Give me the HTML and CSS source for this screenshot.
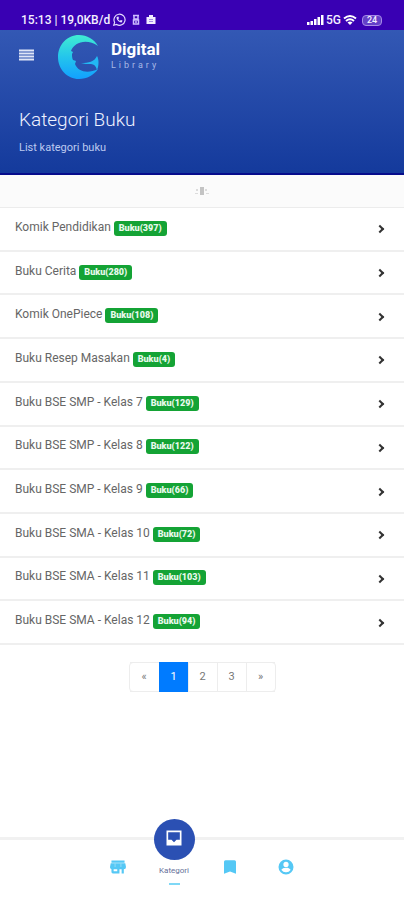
FILE: index.html
```html
<!DOCTYPE html>
<html lang="id">
<head>
<meta charset="utf-8">
<meta name="viewport" content="width=device-width, initial-scale=1">
<title>Kategori Buku</title>
<link rel="stylesheet" href="styles.css">
</head>
<body>
<div class="status">
  <div class="status-group">
    <span>15:13 | 19,0KB/d</span>
    <svg width="14" height="14" viewBox="0 0 24 24" fill="none" stroke="#e6dcff" stroke-width="2"><path d="M3 21l1.500-5A9.500 9.500 0 1 1 8 19.700z"/><path d="M8 7c-1 4 4 10 9 9l1-3-3-1-1.500 1.500-3-3L12 9l-1-3z" fill="#e6dcff" stroke="none"/></svg>
    <svg class="gap-left" width="8" height="12" viewBox="0 0 8 12" fill="none" stroke="#cdbcff" stroke-width="1.500"><path d="M1 1.500h6M2 2v3h4V2M1.500 6h5v4h-5zM3 8h2"/></svg>
    <svg class="gap-left" width="10" height="12" viewBox="0 0 10 12"><path d="M3 3V1h4v2h2.500v7H.5V3z" fill="#f2edff"/><path d="M3 5.500h4M3 7.500h4" stroke="#a58ae6"/></svg>
  </div>
  <div class="status-group">
    <svg width="17" height="12" viewBox="0 0 17 12" fill="#fff"><path d="M0 8h2.500v3H0zM3.500 7H6v4H3.500zM7 5h2.500v6H7zM10.500 3H13v8h-2.500zM14 1h2.500v10H14z"/></svg>
    <span>5G</span>
    <svg width="14" height="12" viewBox="0 0 14 12" fill="none" stroke="#fff" stroke-width="2"><path d="M1 4.500q6-5 12 0M3 7q4-3.500 8 0"/><path d="M4.500 8.500q2.500-2 5 0L7 11z" fill="#fff" stroke="none"/></svg>
    <span class="battery">24</span>
  </div>
</div>

<header class="hero">
  <div class="bar">
    <button class="menu" type="button" aria-label="Menu">
      <svg width="15" height="12" viewBox="0 0 15 12"><path d="M0 1.500h15M0 4.500h15M0 7.500h15M0 10.500h15" stroke="#dfe5f7" stroke-width="2"/></svg>
    </button>
    <a class="brand" href="#">
      <svg width="42" height="44" viewBox="0 0 42 44">
        <defs><linearGradient id="g" x1="0" y1="0" x2="0" y2="1"><stop offset="0" stop-color="#40edd2"/><stop offset=".5" stop-color="#24c5ec"/><stop offset="1" stop-color="#12a0ff"/></linearGradient></defs>
        <path fill="url(#g)" d="M40 11C36 4 29 0 21 0 9 0 0 10 0 22s9 22 21 22c8 0 15-4 19-10-10 5-20 3-23-5l1-3-3-1c-1-2-1-4-1-6l1-2-2-1C16 7 29 3 40 11z"/>
        <path fill="#22b8f4" d="M23 28c8 0 13-1 16-7 2 3 2 10 0 14-1-4-3-6-6-6-4 0-7 0-10-1z"/>
      </svg>
      <span class="brand-text"><strong>Digital</strong><small>Library</small></span>
    </a>
  </div>
  <h1>Kategori Buku</h1>
  <p>List kategori buku</p>
</header>

<main>
  <div class="strip">
    <svg width="14" height="10" viewBox="0 0 14 10" fill="#c4c4c4"><path d="M5 1h4v8H5z"/><path d="M1 3h2v2H1zM0 7h3v1H0zM10 3h2v2h-2zM11 7h3v1h-3z" fill="#dcdcdc"/></svg>
  </div>
  <ul class="list">
    <li><a href="#"><span>Komik Pendidikan <b>Buku(397)</b></span></a></li>
    <li><a href="#"><span>Buku Cerita <b>Buku(280)</b></span></a></li>
    <li><a href="#"><span>Komik OnePiece <b>Buku(108)</b></span></a></li>
    <li><a href="#"><span>Buku Resep Masakan <b>Buku(4)</b></span></a></li>
    <li><a href="#"><span>Buku BSE SMP - Kelas 7 <b>Buku(129)</b></span></a></li>
    <li><a href="#"><span>Buku BSE SMP - Kelas 8 <b>Buku(122)</b></span></a></li>
    <li><a href="#"><span>Buku BSE SMP - Kelas 9 <b>Buku(66)</b></span></a></li>
    <li><a href="#"><span>Buku BSE SMA - Kelas 10 <b>Buku(72)</b></span></a></li>
    <li><a href="#"><span>Buku BSE SMA - Kelas 11 <b>Buku(103)</b></span></a></li>
    <li><a href="#"><span>Buku BSE SMA - Kelas 12 <b>Buku(94)</b></span></a></li>
  </ul>
  <nav class="pages" aria-label="Halaman">
    <a href="#">«</a><a class="current" href="#">1</a><a href="#">2</a><a href="#">3</a><a href="#">»</a>
  </nav>
</main>

<nav class="tabs" aria-label="Navigasi">
  <a href="#" aria-label="Toko"><svg width="16" height="18" viewBox="1 0 22 24" fill="#55c8f5"><path d="M3 3h18v3H3zM2 7h20l1 5a3 3 0 0 1-3 3v6h-3v-6h-3v6H5a2 2 0 0 1-2-2v-4a3 3 0 0 1-2-3zm4 8v3h5v-3z"/><path d="M8 7v5M16 7v5" stroke="#a6e2fa"/></svg></a>
  <a class="active" href="#">
    <span class="bubble"><svg width="20" height="20" viewBox="0 0 24 24"><path d="M4 4h16v16H4z" fill="none" stroke="#fff" stroke-width="2"/><path d="M4 14h5l3 3 3-3h5v6H4z" fill="#fff"/></svg></span>
    <span class="tab-label">Kategori</span>
  </a>
  <a href="#" aria-label="Simpanan"><svg width="18" height="18" viewBox="0 0 24 24" fill="#55c8f5"><path d="M18 3H6a2 2 0 0 0-2 2v16l8-3 8 3V5a2 2 0 0 0-2-2z"/></svg></a>
  <a href="#" aria-label="Akun"><svg width="18" height="18" viewBox="0 0 24 24" fill="#55c8f5"><path d="M12 2a10 10 0 1 0 0 20 10 10 0 0 0 0-20zm0 3a3.500 3.500 0 1 1 0 7 3.500 3.500 0 0 1 0-7zm0 14a7 7 0 0 1-6-3c0-2 4-3 6-3s6 1 6 3a7 7 0 0 1-6 3z"/></svg></a>
</nav>
</body>
</html>
```
FILE: styles.css
```css
*, *::after { box-sizing: border-box; }
body {
  margin: 0;
  min-height: 100vh;
  display: flex;
  flex-direction: column;
  background: #fff;
  color: #666;
  font-family: Roboto, "Liberation Sans", sans-serif;
  font-size: 12px;
}
a { color: inherit; text-decoration: none; }
main { flex: 1; }

.status {
  display: flex;
  justify-content: space-between;
  height: 30px;
  padding: 12px 22px 2px 21px;
  background: #3900b3;
  color: #f4efff;
  font-weight: 500;
  line-height: 16px;
}
.status-group { display: flex; align-items: center; gap: 2px; }
.gap-left { margin-left: 4px; }
.battery {
  width: 20px;
  margin-left: 3px;
  border: 1px solid #a58ae6;
  border-radius: 4px;
  background: #6440c8;
  font-size: 9px;
  line-height: 9px;
  text-align: center;
}

.hero {
  height: 145px;
  padding: 0 19px;
  border-bottom: 2px solid #060c8c;
  background: linear-gradient(#3358b4, #143a9c);
  color: #eef2ff;
}
.bar { display: flex; align-items: center; height: 53px; }
.menu {
  width: 14px;
  height: 24px;
  padding: 0 0 4px;
  border: 0;
  background: none;
}
.menu svg { display: block; }
.brand { display: flex; align-items: center; gap: 11px; margin-left: 25px; }
.brand svg { display: block; }
.brand-text { display: flex; flex-direction: column; }
.brand strong { font-size: 17px; line-height: 18px; color: #fff; }
.brand small { font-size: 9px; line-height: 15px; letter-spacing: 3px; color: #a9bae6; }
h1 { margin: 24px 0 0; font-size: 19px; font-weight: 300; line-height: 26px; }
.hero p { margin: 8px 0 0; font-size: 11px; line-height: 14px; color: #bccaf0; }

.strip {
  display: flex;
  align-items: center;
  justify-content: center;
  height: 33px;
  border-bottom: 1px solid #ececec;
  background: #fbfbfb;
}
.list {
  display: flex;
  flex-direction: column;
  min-height: 437px;
  margin: 0;
  padding: 0;
  list-style: none;
}
.list li { flex: 1; display: flex; border-bottom: 2px solid #efefef; }
.list a {
  flex: 1;
  display: flex;
  align-items: center;
  justify-content: space-between;
  padding: 0 20px 2px 15px;
}
.list a::after {
  content: "";
  width: 6px;
  height: 6px;
  margin: 3px 1px 0 0;
  border: solid #333;
  border-width: 2px 2px 0 0;
  transform: rotate(45deg);
}
.list b {
  display: inline-block;
  padding: 0 5px;
  border-radius: 3px;
  background: #14a335;
  color: #e8f9ec;
  font-size: 9px;
  font-weight: 900;
  line-height: 15px;
}

.pages {
  display: flex;
  width: max-content;
  margin: 17px auto 96px;
  border: 1px solid #ededed;
  border-radius: 4px;
}
.pages a {
  width: 29px;
  margin: -1px 0;
  border: solid #ededed;
  border-width: 1px 0 1px 1px;
  font-size: 11px;
  line-height: 28px;
  text-align: center;
  color: #777;
}
.pages a:first-child { border-left: 0; }
.pages .current { border-color: #007bff; background: #007bff; color: #fff; }

.tabs {
  position: sticky;
  bottom: 0;
  display: flex;
  justify-content: center;
  height: 63px;
  border-top: 3px solid #f1f1f1;
  background: #fff;
}
.tabs a {
  display: flex;
  flex-direction: column;
  align-items: center;
  width: 56px;
  padding-top: 18px;
}
.tabs .active { padding-top: 0; }
.bubble {
  display: flex;
  align-items: center;
  justify-content: center;
  width: 41px;
  height: 41px;
  margin-top: -21px;
  padding-bottom: 4px;
  border-radius: 50%;
  background: #2b50b3;
}
.tab-label { margin-top: 6px; font-size: 8px; line-height: 10px; color: #667099; }
.active::after {
  content: "";
  width: 11px;
  height: 2px;
  margin-top: 7px;
  background: #7fd8f6;
}
```
